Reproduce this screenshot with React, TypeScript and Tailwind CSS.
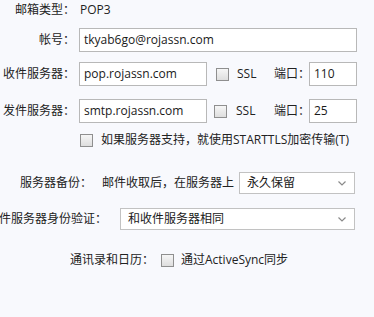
import React from "react";

const font = "font-['Open_Sans','Noto_Sans_CJK_SC',sans-serif]";

function Box({ className = "" }: { className?: string }) {
  return (
    <span
      className={`block h-[13px] w-[13px] flex-none border border-[#8f8f8f] bg-linear-to-b from-[#f6f6f6] to-[#dedede] ${className}`}
    />
  );
}

function Field({ value, className = "" }: { value: string; className?: string }) {
  return (
    <div
      className={`flex h-[24px] flex-none items-center border border-[#b8b8b8] bg-white pl-[4px] text-[12px] text-[#1a1a1a] ${className}`}
    >
      {value}
    </div>
  );
}

function Select({ value, className = "" }: { value: string; className?: string }) {
  return (
    <div
      className={`flex h-[22px] flex-none items-center justify-between border border-[#c2c2c2] bg-white pl-[7px] pr-[8px] text-[12px] text-[#1a1a1a] ${className}`}
    >
      <span>{value}</span>
      <svg width="8" height="5" viewBox="0 0 8 5" className="text-[#8a8a8a]">
        <polyline points="0.5,0.5 4,4 7.5,0.5" fill="none" stroke="currentColor" strokeWidth="1.2" />
      </svg>
    </div>
  );
}

function Label({ text, width }: { text: string; width: string }) {
  return (
    <div className={`flex flex-none justify-end whitespace-nowrap ${width}`}>
      <span>{text}</span>
    </div>
  );
}

export default function App() {
  return (
    <div
      className={`h-[317px] w-[374px] overflow-hidden whitespace-nowrap bg-[#f8f9fd] text-[12px] leading-none text-[#222] ${font}`}
    >
      <div className="flex h-[20px] items-center">
        <Label text="邮箱类型：" width="w-[75px]" />
        <span className="ml-[5px]">POP3</span>
      </div>

      <div className="mt-[8px] flex items-center">
        <Label text="帐号：" width="w-[75px]" />
        <Field value="tkyab6go@rojassn.com" className="ml-[4px] w-[278px]" />
      </div>

      <div className="mt-[10px] flex items-center">
        <Label text="收件服务器：" width="w-[75px]" />
        <Field value="pop.rojassn.com" className="ml-[4px] w-[128px]" />
        <Box className="ml-[9px]" />
        <span className="ml-[8px] w-[37px] flex-none">SSL</span>
        <span className="w-[35px] flex-none">端口：</span>
        <Field value="110" className="w-[48px]" />
      </div>

      <div className="mt-[13px] flex items-center">
        <Label text="发件服务器：" width="w-[75px]" />
        <Field value="smtp.rojassn.com" className="ml-[4px] w-[128px]" />
        <Box className="ml-[7px]" />
        <span className="ml-[9px] w-[38px] flex-none">SSL</span>
        <span className="w-[35px] flex-none">端口：</span>
        <Field value="25" className="w-[48px]" />
      </div>

      <div className="mt-[9px] flex h-[16px] items-center pl-[80px]">
        <Box />
        <span className="ml-[8px]">如果服务器支持，就使用STARTTLS加密传输(T)</span>
      </div>

      <div className="mt-[24px] flex items-center">
        <Label text="服务器备份：" width="w-[92px]" />
        <span className="ml-[10px] w-[137px] flex-none">邮件收取后，在服务器上</span>
        <Select value="永久保留" className="w-[116px]" />
      </div>

      <div className="mt-[14px] flex items-center">
        <Label text="发件服务器身份验证：" width="w-[107px]" />
        <Select value="和收件服务器相同" className="ml-[13px] w-[235px]" />
      </div>

      <div className="mt-[22px] flex h-[16px] items-center">
        <Label text="通讯录和日历：" width="w-[154px]" />
        <Box className="ml-[7px]" />
        <span className="ml-[7px]">通过ActiveSync同步</span>
      </div>
    </div>
  );
}
